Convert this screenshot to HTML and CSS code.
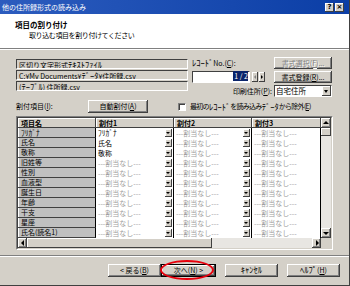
FILE: index.html
```html
<!DOCTYPE html>
<html lang="ja">
<head>
    <meta charset="UTF-8">
    <title>他の住所録形式の読み込み</title>
    <link rel="stylesheet" href="styles.css">
</head>
<body>
    <div class="window">
        <div class="titlebar">
            <span class="title">他の住所録形式の読み込み</span>
            <div class="title-btns">
                <span class="tbtn">?</span>
                <span class="tbtn">×</span>
            </div>
        </div>

        <div class="header">
            <div class="header-title">項目の割り付け</div>
            <div class="header-sub">取り込む項目を割り付けてください</div>
        </div>

        <div class="content">
            <div class="top">
                <div class="files">
                    <div class="field">区切り文字形式<span class="hw">ﾃｷｽﾄﾌｧｲﾙ</span></div>
                    <div class="field">C:¥My Documents¥<span class="hw">ﾃﾞｰﾀ</span>¥住所録.csv</div>
                    <div class="field">(<span class="hw">ﾃｰﾌﾞﾙ</span>) 住所録.csv</div>
                </div>
                <div class="record">
                    <div class="label"><span class="hw">ﾚｺｰﾄﾞ</span>No.(<u>C</u>):</div>
                    <div class="btn disabled">書式選択(<u>F</u>)...</div>
                    <div class="record-nav">
                        <div class="input"><span class="sel">1 / 2</span></div>
                        <span class="spin left"></span>
                        <span class="spin right"></span>
                    </div>
                    <div class="btn">書式登録(<u>R</u>)...</div>
                    <div class="label right">印刷住所(<u>P</u>):</div>
                    <div class="select">自宅住所<span class="drop"></span></div>
                </div>
            </div>

            <div class="assign-row">
                <div class="assign-label">割付項目(<u>I</u>):</div>
                <div class="btn auto">自動割付(<u>A</u>)</div>
                <label class="check"><span class="box"></span>最初の<span class="hw">ﾚｺｰﾄﾞ</span>を読み込み<span class="hw">ﾃﾞｰﾀ</span>から除外(<u>E</u>)</label>
            </div>

            <div class="table-frame">
                <div class="table-inner">
                    <div class="table-main">
                        <div class="table-cols">
                            <div class="t-row t-head">
                                <div class="hc">項目名</div>
                                <div class="hc">割付1</div>
                                <div class="hc">割付2</div>
                                <div class="hc">割付3</div>
                            </div>
                            <div class="t-row">
                                <div class="rh"><span class="hw">ﾌﾘｶﾞﾅ</span></div>
                                <div class="dc set"><span class="hw">ﾌﾘｶﾞﾅ</span><span class="dd"></span></div>
                                <div class="dc">---割当なし---<span class="dd"></span></div>
                                <div class="dc">---割当なし---</div>
                            </div>
                            <div class="t-row">
                                <div class="rh">氏名</div>
                                <div class="dc set">氏名<span class="dd"></span></div>
                                <div class="dc">---割当なし---<span class="dd"></span></div>
                                <div class="dc">---割当なし---</div>
                            </div>
                            <div class="t-row">
                                <div class="rh">敬称</div>
                                <div class="dc set">敬称<span class="dd"></span></div>
                                <div class="dc">---割当なし---<span class="dd"></span></div>
                                <div class="dc">---割当なし---</div>
                            </div>
                            <div class="t-row">
                                <div class="rh">旧姓等</div>
                                <div class="dc">---割当なし---<span class="dd"></span></div>
                                <div class="dc">---割当なし---<span class="dd"></span></div>
                                <div class="dc">---割当なし---</div>
                            </div>
                            <div class="t-row">
                                <div class="rh">性別</div>
                                <div class="dc">---割当なし---<span class="dd"></span></div>
                                <div class="dc">---割当なし---<span class="dd"></span></div>
                                <div class="dc">---割当なし---</div>
                            </div>
                            <div class="t-row">
                                <div class="rh">血液型</div>
                                <div class="dc">---割当なし---<span class="dd"></span></div>
                                <div class="dc">---割当なし---<span class="dd"></span></div>
                                <div class="dc">---割当なし---</div>
                            </div>
                            <div class="t-row">
                                <div class="rh">誕生日</div>
                                <div class="dc">---割当なし---<span class="dd"></span></div>
                                <div class="dc">---割当なし---<span class="dd"></span></div>
                                <div class="dc">---割当なし---</div>
                            </div>
                            <div class="t-row">
                                <div class="rh">年齢</div>
                                <div class="dc">---割当なし---<span class="dd"></span></div>
                                <div class="dc">---割当なし---<span class="dd"></span></div>
                                <div class="dc">---割当なし---</div>
                            </div>
                            <div class="t-row">
                                <div class="rh">干支</div>
                                <div class="dc">---割当なし---<span class="dd"></span></div>
                                <div class="dc">---割当なし---<span class="dd"></span></div>
                                <div class="dc">---割当なし---</div>
                            </div>
                            <div class="t-row">
                                <div class="rh">星座</div>
                                <div class="dc">---割当なし---<span class="dd"></span></div>
                                <div class="dc">---割当なし---<span class="dd"></span></div>
                                <div class="dc">---割当なし---</div>
                            </div>
                            <div class="t-row">
                                <div class="rh">氏名(読名1)</div>
                                <div class="dc">---割当なし---<span class="dd"></span></div>
                                <div class="dc">---割当なし---<span class="dd"></span></div>
                                <div class="dc">---割当なし---</div>
                            </div>
                        </div>
                        <div class="vscroll">
                            <span class="sbtn up"></span>
                            <span class="vthumb"></span>
                            <span class="track"></span>
                            <span class="sbtn down"></span>
                        </div>
                    </div>
                    <div class="hscroll-row">
                        <div class="hscroll">
                            <span class="sbtn left"></span>
                            <span class="hthumb"></span>
                            <span class="track"></span>
                            <span class="sbtn right"></span>
                        </div>
                        <div class="corner"></div>
                    </div>
                </div>
            </div>
        </div>

        <div class="footer">
            <div class="btn wide">&lt; 戻る(<u>B</u>)</div>
            <div class="btn wide default">次へ(<u>N</u>) &gt;<span class="mark"></span></div>
            <div class="btn wide gap"><span class="hw">ｷｬﾝｾﾙ</span></div>
            <div class="btn wide gap"><span class="hw">ﾍﾙﾌﾟ</span>(<u>H</u>)</div>
        </div>
    </div>
</body>
</html>
```

FILE: styles.css
```css
body {
    margin: 0;
    font-family: "Noto Sans CJK JP", "DejaVu Sans", sans-serif;
    font-size: 7px;
    line-height: 9px;
    color: #000;
    background: #d4d0c8;
}
u {
    text-decoration: underline;
}
/* half-width katakana are tiny in Noto, bump them up */
.hw {
    font-size: 8.5px;
    line-height: 1;
    letter-spacing: 0;
}
.window {
    width: 350px;
    height: 286px;
    box-sizing: border-box;
    background: #d4d0c8;
    border-right: 1px solid #404040;
    border-bottom: 1px solid #404040;
    display: flex;
    flex-direction: column;
}

/* title bar */
.titlebar {
    height: 14px;
    background: linear-gradient(to right, #2c5cbe, #0b3ea6);
    color: #fff;
    display: flex;
    align-items: center;
    justify-content: space-between;
    padding: 0 5px 0 2px;
}
.title-btns {
    display: flex;
    gap: 1px;
}
.tbtn {
    width: 9px;
    height: 9px;
    box-sizing: border-box;
    background: #d4d0c8;
    color: #000;
    font-family: "DejaVu Sans", sans-serif;
    font-size: 7px;
    font-weight: bold;
    line-height: 9px;
    text-align: center;
    box-shadow: inset -1px -1px #404040, inset 1px 1px #fff;
}

/* white header */
.header {
    height: 35px;
    box-sizing: border-box;
    background: #fff;
    border-bottom: 1px solid #808080;
    padding: 6px 0 0 15px;
}
.header-title {
    font-weight: bold;
    font-size: 7.5px;
    line-height: 9px;
}
.header-sub {
    padding-left: 14px;
    margin-top: 2px;
    letter-spacing: -0.4px;
}

.content {
    border-top: 1px solid #fff;
    padding: 7px 0 0 16px;
}

/* top section */
.top {
    display: flex;
}
.files {
    width: 172px;
    margin-top: 2px;
    display: flex;
    flex-direction: column;
    gap: 1px;
}
.field {
    height: 10px;
    box-sizing: border-box;
    border: 1px solid;
    border-color: #404040 #fff #fff #404040;
    padding-left: 2px;
    line-height: 8px;
    white-space: nowrap;
    overflow: hidden;
}
.record {
    margin-left: 4px;
    display: grid;
    grid-template-columns: 80px 58px;
    grid-template-rows: 12px 12px 12px;
    column-gap: 2px;
    row-gap: 2px;
    align-items: center;
}
.label {
    white-space: nowrap;
}
.label.right {
    text-align: right;
}
.record-nav {
    display: flex;
    align-items: center;
    height: 12px;
}
.input {
    width: 58px;
    height: 12px;
    box-sizing: border-box;
    background: #fff;
    border: 1px solid;
    border-color: #404040 #fff #fff #404040;
    text-align: right;
    padding-right: 1px;
    line-height: 9px;
}
.sel {
    background: #0a246a;
    color: #fff;
    padding-left: 1px;
}
.spin {
    width: 6px;
    height: 10px;
    margin-left: 2px;
    position: relative;
    box-shadow: inset -1px -1px #404040, inset 1px 1px #fff;
}
.spin + .spin {
    margin-left: 1px;
}
.spin::after {
    content: "";
    position: absolute;
    top: 3px;
    left: 2px;
    border-top: 2px solid transparent;
    border-bottom: 2px solid transparent;
}
.spin.left::after {
    border-right: 2px solid #808080;
}
.spin.right::after {
    border-left: 2px solid #000;
}
.select {
    height: 12px;
    box-sizing: border-box;
    background: #fff;
    border: 1px solid;
    border-color: #404040 #fff #fff #404040;
    padding-left: 1px;
    font-size: 7.5px;
    line-height: 10px;
    display: flex;
    justify-content: space-between;
}
.drop {
    width: 9px;
    height: 10px;
    background: #d4d0c8;
    position: relative;
    box-shadow: inset -1px -1px #404040, inset 1px 1px #fff;
}
.drop::after {
    content: "";
    position: absolute;
    top: 4px;
    left: 2px;
    border-top: 3px solid #000;
    border-left: 2.5px solid transparent;
    border-right: 2.5px solid transparent;
}

/* buttons */
.btn {
    height: 12px;
    box-sizing: border-box;
    background: #d4d0c8;
    text-align: center;
    line-height: 12px;
    white-space: nowrap;
    box-shadow: inset -1px -1px #404040, inset 1px 1px #fff, inset -2px -2px #808080;
}
.btn.disabled {
    color: #808080;
    text-shadow: 1px 1px 0 #fff;
}

/* assign row */
.assign-row {
    display: flex;
    align-items: center;
    height: 13px;
    margin-top: 3px;
}
.assign-label {
    width: 72px;
}
.btn.auto {
    width: 60px;
    height: 13px;
    line-height: 13px;
}
.check {
    margin-left: 30px;
    display: flex;
    align-items: center;
    white-space: nowrap;
    letter-spacing: -0.7px;
}
.box {
    width: 8px;
    height: 8px;
    box-sizing: border-box;
    background: #fff;
    border: 1px solid;
    border-color: #808080 #fff #fff #808080;
    box-shadow: inset 1px 1px #404040;
    margin-right: 4px;
}

/* assignment table */
.table-frame {
    width: 317px;
    margin-top: 3px;
    box-sizing: border-box;
    border: 1px solid;
    border-color: #808080 #fff #fff #808080;
}
.table-inner {
    border: 1px solid;
    border-color: #404040 #d4d0c8 #d4d0c8 #404040;
}
.table-main {
    display: flex;
}
.table-cols {
    width: 303px;
    overflow: hidden;
}
.t-row {
    display: grid;
    grid-template-columns: 78px 78px 78px 69px;
    height: 10px;
    background: #fff;
}
.t-row .hw {
    font-size: 7.5px;
}
.hc {
    background: #d4d0c8;
    font-weight: bold;
    padding-left: 3px;
    line-height: 10px;
    box-shadow: inset -1px -1px #404040, inset 1px 1px #fff;
}
.rh {
    display: flex;
    align-items: center;
    background: #c0c0c0;
    padding-left: 3px;
    border-bottom: 1px solid #404040;
    border-right: 1px solid #000;
    box-shadow: inset 1px 0 #fff;
    white-space: nowrap;
}
.dc {
    display: flex;
    align-items: center;
    justify-content: space-between;
    padding-left: 2px;
    color: #a0a0a0;
    border-right: 1px solid #000;
    white-space: nowrap;
}
.dc.set {
    color: #000;
}
.dd {
    width: 7px;
    height: 8px;
    margin-right: 1px;
    background: #d4d0c8;
    position: relative;
    box-shadow: inset -1px -1px #404040, inset 1px 1px #fff;
}
.dd::after {
    content: "";
    position: absolute;
    top: 3px;
    left: 1px;
    border-top: 2px solid #000;
    border-left: 2px solid transparent;
    border-right: 2px solid transparent;
}

/* scrollbars */
.vscroll {
    width: 10px;
    display: flex;
    flex-direction: column;
}
.sbtn {
    width: 10px;
    height: 10px;
    flex: none;
    background: #d4d0c8;
    position: relative;
    box-shadow: inset -1px -1px #404040, inset 1px 1px #fff, inset -2px -2px #808080;
}
.sbtn::after {
    content: "";
    position: absolute;
}
.sbtn.up::after {
    top: 3px;
    left: 2px;
    border-bottom: 3px solid #000;
    border-left: 3px solid transparent;
    border-right: 3px solid transparent;
}
.sbtn.down::after {
    top: 4px;
    left: 2px;
    border-top: 3px solid #000;
    border-left: 3px solid transparent;
    border-right: 3px solid transparent;
}
.sbtn.left::after {
    top: 2px;
    left: 3px;
    border-right: 3px solid #000;
    border-top: 3px solid transparent;
    border-bottom: 3px solid transparent;
}
.sbtn.right::after {
    top: 2px;
    left: 4px;
    border-left: 3px solid #000;
    border-top: 3px solid transparent;
    border-bottom: 3px solid transparent;
}
.vthumb {
    height: 8px;
    flex: none;
    background: #d4d0c8;
    box-shadow: inset -1px -1px #404040, inset 1px 1px #fff;
}
.track {
    flex: 1;
    background: #e8e6e2;
}
.hscroll-row {
    display: flex;
    height: 10px;
}
.hscroll {
    width: 303px;
    display: flex;
}
.hscroll .sbtn {
    width: 9px;
}
.hthumb {
    width: 185px;
    flex: none;
    background: #d4d0c8;
    box-shadow: inset -1px -1px #404040, inset 1px 1px #fff;
}
.corner {
    flex: 1;
    background: #d4d0c8;
}

/* footer */
.footer {
    margin-top: 5px;
    border-top: 1px solid #808080;
    box-shadow: inset 0 1px #fff;
    display: flex;
    padding: 8px 9px 0 0;
    justify-content: flex-end;
}
.btn.wide {
    width: 53px;
    height: 13px;
    line-height: 13px;
}
.btn.default {
    width: 55px;
    position: relative;
    box-shadow: inset 0 0 0 1px #000, inset -2px -2px #404040, inset 2px 2px #fff, inset -3px -3px #808080;
}
.btn.gap {
    margin-left: 9px;
}
.mark {
    position: absolute;
    left: -1px;
    top: -4px;
    width: 54px;
    height: 20px;
    box-sizing: border-box;
    border: 2px solid #e8000c;
    border-radius: 50%;
}
```
